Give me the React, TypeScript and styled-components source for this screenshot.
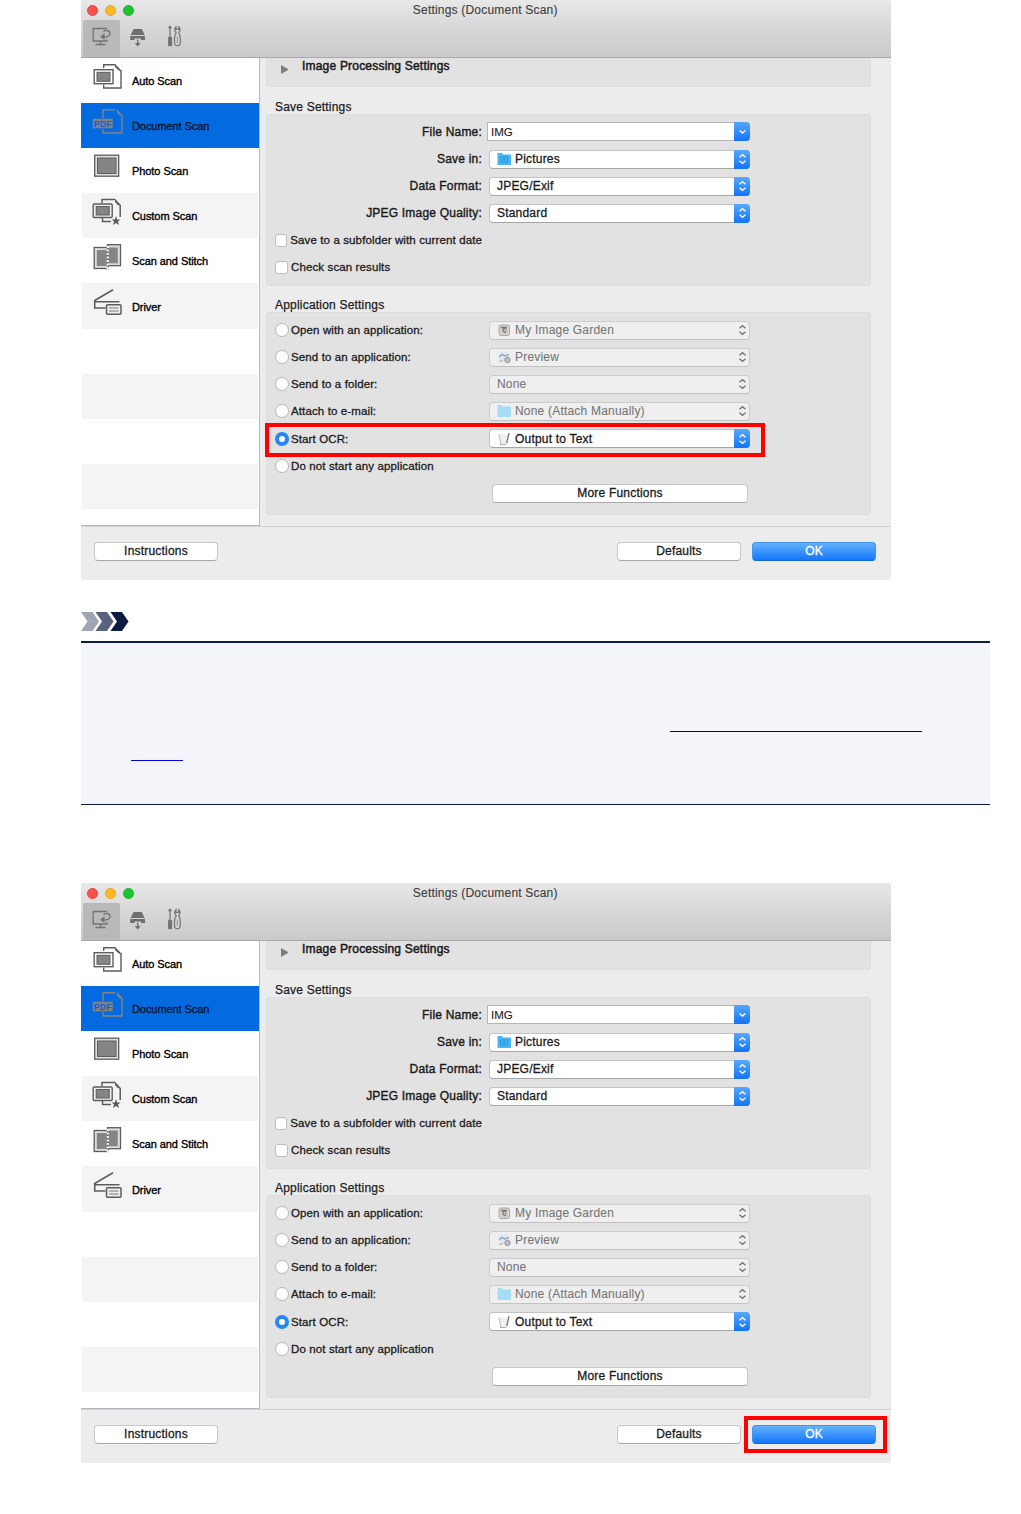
import React from "react";
import styled, { createGlobalStyle, css } from "styled-components";

const Global = createGlobalStyle`
  * { box-sizing: border-box; }
  body { margin: 0; background: #fff; font-family: "Liberation Sans", Arial, sans-serif; }
  svg { display: block; }
`;

const Page = styled.main`
  width: 1021px;
  height: 1514px;
  padding-left: 81px;
  overflow: hidden;
`;

const Win = styled.section`
  position: relative;
  display: flex;
  flex-direction: column;
  width: 809.5px;
  height: 579.5px;
  background: #ececec;
  border-radius: 3px;
  overflow: hidden;
  font-size: 12px;
  letter-spacing: 0.2px;
  line-height: 16px;
  color: #1c1c1c;
  white-space: nowrap;
`;

const Header = styled.header`
  display: flex;
  flex-direction: column;
  height: 58px;
  flex: none;
  background: linear-gradient(#e8e8e8, #d8d7d8 50%, #cacaca);
  border-bottom: 1px solid #a9a9a9;
`;

const TitleBar = styled.div`
  display: grid;
  grid-template-columns: 100px 1fr 100px;
  align-items: center;
  height: 20px;
  text-align: center;
  color: #424242;
  padding-right: 1px;
  -webkit-text-stroke: 0.15px #424242;
`;

const Lights = styled.div`
  display: flex;
  gap: 7px;
  padding-left: 6px;
`;

const Light = styled.i<{ $c: string; $b: string }>`
  width: 11px;
  height: 11px;
  border-radius: 50%;
  background: ${(p) => p.$c};
  border: 1px solid ${(p) => p.$b};
`;

const Toolbar = styled.nav`
  display: flex;
  flex: 1;
  padding-left: 2px;
`;

const Tool = styled.div<{ $on?: boolean }>`
  display: flex;
  justify-content: center;
  width: 36.5px;
  padding-top: 5px;
  border-radius: 2px 2px 0 0;
  background: ${(p) => (p.$on ? "#bab9ba" : "transparent")};
`;

const Body = styled.div`
  display: flex;
  height: 469px;
  flex: none;
  border-bottom: 1px solid #d3d3d3;
`;

const Sidebar = styled.aside`
  width: 179px;
  flex: none;
  background: #fff;
  border-right: 1px solid #b9bac2;
  border-bottom: 1px solid #b5b5ba;
  overflow: hidden;
`;

const Item = styled.div<{ $on?: boolean; $alt?: boolean }>`
  display: flex;
  align-items: center;
  height: 45.1px;
  padding: 1px 0 0 8px;
  gap: 6px;
  font-size: 11px;
  letter-spacing: -0.07px;
  color: #000;
  -webkit-text-stroke: 0.35px currentColor;
  background: ${(p) => (p.$alt ? "#f4f4f4" : "#fff")};
  margin: 0 1px;
  ${(p) =>
    p.$on &&
    css`
      margin: 0;
      padding-left: 9px;
      background: #036ae0;
      color: #06152f;
    `}
  svg {
    margin-top: -8px;
    -webkit-text-stroke: 0;
  }
`;

const Content = styled.div`
  display: flex;
  flex-direction: column;
  width: 611px;
  padding-left: 6px;
`;

const panel = css`
  background: #e2e2e2;
  border: 1px solid #dedede;
  border-radius: 3px;
`;

const Collapsed = styled.div`
  ${panel}
  display: flex;
  height: 29px;
  flex: none;
  border-top: 0;
  border-radius: 0 0 3px 3px;
  padding-left: 14px;
  gap: 14px;
  -webkit-text-stroke: 0.5px #1c1c1c;
`;

const Arrow = styled.i`
  margin-top: 7px;
  border: 4.5px solid transparent;
  border-left: 7px solid #7d7d7d;
  border-right: 0;
  height: 9px;
`;

const Heading = styled.h3<{ $top: number }>`
  margin: ${(p) => p.$top}px 0 0 9px;
  font: inherit;
  height: 14px;
  line-height: 14px;
  flex: none;
  -webkit-text-stroke: 0.25px #1c1c1c;
`;

const Panel = styled.div<{ $h: number; $pad: number }>`
  ${panel}
  height: ${(p) => p.$h}px;
  flex: none;
  padding-top: ${(p) => p.$pad}px;
`;

const Row = styled.div`
  display: grid;
  grid-template-columns: 215px 262px;
  column-gap: 6px;
  align-items: center;
  height: 27.1px;
`;

const Label = styled.span`
  text-align: right;
  -webkit-text-stroke: 0.4px #1c1c1c;
`;

const Choice = styled.label`
  display: flex;
  align-items: center;
  gap: 3px;
  padding-left: 8px;
  font-size: 11.5px;
  letter-spacing: 0.12px;
  -webkit-text-stroke: 0.3px #1c1c1c;
`;

const Check = styled.i`
  width: 12.5px;
  height: 12.5px;
  margin-right: 0.5px;
  background: #fff;
  border: 1px solid #bdbdbd;
  border-radius: 3px;
`;

const Radio = styled.i<{ $on?: boolean }>`
  width: 14px;
  height: 14px;
  margin-right: -1px;
  border-radius: 50%;
  border: ${(p) => (p.$on ? "4.5px solid #2388f5" : "1px solid #b7b7b7")};
  background: #fff;
`;

const Select = styled.div<{ $off?: boolean }>`
  display: flex;
  align-items: center;
  gap: 4px;
  width: 261px;
  height: 19px;
  margin-left: 1px;
  padding-left: 7px;
  border: 1px solid ${(p) => (p.$off ? "#cdcdcd" : "#c3c3c3")};
  border-bottom-color: ${(p) => (p.$off ? "#c2c2c2" : "#a6a6a6")};
  border-right-width: ${(p) => (p.$off ? 1 : 0)}px;
  border-radius: 4px;
  background: ${(p) => (p.$off ? "#efefef" : "#fff")};
  color: ${(p) => (p.$off ? "#777" : "#1c1c1c")};
  -webkit-text-stroke: ${(p) => (p.$off ? 0.1 : 0.3)}px;
`;

const Field = styled(Select)`
  width: 263px;
  margin-left: -1px;
  padding-left: 3px;
  border-radius: 0 4px 4px 0;
  border-color: #b5b5b5;
  font-size: 11.5px;
  letter-spacing: 0;
  -webkit-text-stroke: 0.1px;
`;

const Stepper = styled.span<{ $off?: boolean }>`
  display: flex;
  align-items: center;
  justify-content: center;
  width: 16px;
  height: 19px;
  margin: -1px ${(p) => (p.$off ? -1 : 0)}px -1px auto;
  flex: none;
  border-radius: 0 4px 4px 0;
  color: ${(p) => (p.$off ? "#777" : "#fff")};
  background: ${(p) => (p.$off ? "transparent" : "linear-gradient(#58a8f8, #1273fa)")};
`;

const Button = styled.button<{ $w: number; $primary?: boolean }>`
  width: ${(p) => p.$w}px;
  height: 19px;
  padding: 0;
  font: inherit;
  letter-spacing: inherit;
  line-height: 17px;
  color: ${(p) => (p.$primary ? "#fff" : "#1c1c1c")};
  -webkit-text-stroke: 0.3px;
  background: ${(p) => (p.$primary ? "linear-gradient(#64b1fb, #1476fb)" : "#fff")};
  border: 1px solid ${(p) => (p.$primary ? "#3f92ee" : "#c8c8c8")};
  border-bottom-color: ${(p) => (p.$primary ? "#1266dc" : "#a9a9a9")};
  border-radius: 4px;
`;

const More = styled.div`
  display: flex;
  align-items: center;
  height: 28px;
  padding-left: 225px;
`;

const Footer = styled.footer`
  display: flex;
  padding: 15px 14.5px 0 13px;
  gap: 11px;
`;

const Spacer = styled.span`
  flex: 1;
`;

/* Red callout drawn over the window contents. */
const Callout = styled.div<{ $x: number; $y: number; $w: number; $h: number }>`
  position: absolute;
  left: ${(p) => p.$x}px;
  top: ${(p) => p.$y}px;
  width: ${(p) => p.$w}px;
  height: ${(p) => p.$h}px;
  border: 4px solid #fe0000;
`;

const Chevrons = styled.div`
  height: 61.5px;
  padding-top: 32.5px;
`;

const Note = styled.section`
  display: flex;
  flex-direction: column;
  width: 909px;
  height: 164px;
  margin-bottom: 78px;
  padding: 88px 68px 0 50px;
  background: #f3f5fb;
  border-top: 2px solid #0b1c46;
  border-bottom: 1px solid #0b1c46;
`;

const LinkRule = styled.a<{ $w: number; $end?: boolean }>`
  width: ${(p) => p.$w}px;
  height: 1px;
  margin-bottom: 28px;
  background: ${(p) => (p.$end ? "#0000a8" : "#0000e0")};
  align-self: ${(p) => (p.$end ? "flex-end" : "flex-start")};
`;

const G = "#5c5c5c";

const icons: Record<string, React.ReactNode> = {
  auto: (
    <>
      <path d="M13.700 6V2.700H25.500M13.700 22.500V26H31V8" fill="none" stroke={G} strokeWidth="1.4" />
      <path d="M25 2L31.700 8.700H29L25 5Z" fill={G} />
      <rect x="4.200" y="7.700" width="18.800" height="14" fill="#fff" stroke={G} strokeWidth="1.4" />
      <rect x="7" y="10.300" width="13" height="9" fill="#858585" stroke={G} />
    </>
  ),
  pdf: (
    <>
      <path d="M13 11V2.700H25.500M13 22V26H32V8" fill="none" stroke="#86817f" strokeWidth="1.4" />
      <path d="M27 2L32.700 8.700H30L27 5.500Z" fill="#86817f" />
      <rect x="2.700" y="11.700" width="20" height="9.600" fill="#81807f" />
      <text x="3.800" y="19.500" fontSize="8.500" fontWeight="bold" letterSpacing="0.300" fill="#1264c8">PDF</text>
    </>
  ),
  photo: (
    <>
      <rect x="4.700" y="3.200" width="24" height="21" fill="#e0e0e0" stroke={G} strokeWidth="1.3" />
      <rect x="7.500" y="6" width="18.500" height="15.500" fill="#858585" stroke={G} />
    </>
  ),
  custom: (
    <>
      <path d="M12 6V2.500H25M12.500 21V24.500H21M30.200 8V20" fill="none" stroke={G} strokeWidth="1.5" />
      <path d="M25 1.800L31 8.200H28L25 5Z" fill={G} />
      <rect x="3.200" y="7" width="19" height="13.500" rx="1" fill="#eee" stroke={G} strokeWidth="1.4" />
      <rect x="6.200" y="9.500" width="13" height="8.500" fill="#858585" stroke={G} />
      <path d="M26 19L27.200 22.500H30.500L28 24.600L29 28L26 26L23 28L24 24.600L21.500 22.500H24.800Z" fill={G} />
    </>
  ),
  stitch: (
    <>
      <rect x="4.200" y="5.500" width="14" height="21" fill="#ddd" stroke={G} strokeWidth="1.3" />
      <rect x="6.800" y="8" width="10.500" height="16" fill="#858585" />
      <rect x="17.500" y="2.700" width="13" height="21" fill="#ddd" stroke={G} strokeWidth="1.3" />
      <rect x="18" y="5.500" width="9.800" height="15.800" fill="#858585" />
      <path d="M17.700 4V27" stroke="#fff" strokeWidth="2" strokeDasharray="2 1.500" />
    </>
  ),
  driver: (
    <>
      <path d="M23 1.700L4.700 12.500V20H15.500M4.700 13.700H29.500" fill="none" stroke={G} strokeWidth="1.6" />
      <rect x="16.500" y="16.700" width="14.500" height="9.500" rx="1" fill="#eee" stroke={G} strokeWidth="1.5" />
      <path d="M19 20H28.500M19 23H28.500" fill="none" stroke="#777" />
    </>
  ),
};

const SideIcon = ({ name }: { name: string }) => (
  <svg width="36" height="30" viewBox="0 0 36 30">{icons[name]}</svg>
);

const ScanTool = () => (
  <svg width="22" height="22" viewBox="0 0 22 22" fill="none" stroke="#737373" strokeWidth="1.300">
    <path d="M17 3.500H3.200V16H17V14.500M10.500 16V19M5.500 19.500H15.500" />
    <path d="M13.500 7C15 4.500 20 5 20 8.500C20 11.500 17 12 14 12" />
    <path d="M14.500 8.200L10 11.700L14.500 14.700Z" fill="#737373" stroke="none" />
  </svg>
);

const PanelTool = () => (
  <svg width="22" height="22" viewBox="0 0 22 22" fill="#6f6f6f">
    <path d="M6.700 4H14.700L17.700 10H3.500ZM3.200 11H18V15H14V13.500H7.500V15H3.200Z" />
    <path d="M10 14.500H11.400V18H13.700L10.700 21.500L7.700 18H10Z" />
  </svg>
);

const GearTool = () => (
  <svg width="22" height="22" viewBox="0 0 22 22" fill="none" stroke="#737373" strokeWidth="1.200">
    <path d="M7 2V12M5.500 3.200L7 1.200L8.500 3.200" />
    <rect x="5.700" y="12.500" width="2.800" height="8" fill="#737373" />
    <path d="M13 1.800C11.300 3.300 11.300 6 13 7.300V8.500C11.300 9.700 11.500 11.500 11.500 17.500C11.500 21.800 17.300 21.800 17.300 17.500C17.300 11.500 17.500 9.700 15.800 8.500V7.300C17.500 6 17.500 3.300 15.800 1.800V4.300H13Z" />
    <path d="M14.400 11.500V18" stroke="#a0a0a0" />
  </svg>
);

const UpDown = () => (
  <svg width="9" height="12" viewBox="0 0 9 12" fill="none" stroke="currentColor" strokeWidth="1.400">
    <path d="M1.500 4.300L4.500 1.700L7.500 4.300M1.500 7.700L4.500 10.300L7.500 7.700" />
  </svg>
);

const Down = () => (
  <svg width="9" height="6" viewBox="0 0 9 6" fill="none" stroke="currentColor" strokeWidth="1.500">
    <path d="M1.700 1.500L4.500 4L7.300 1.500" />
  </svg>
);

const small: Record<string, React.ReactNode> = {
  folder: (
    <>
      <path d="M0.500 1H5L6 2.500H14V13H0.500Z" fill="#49b5f3" />
      <rect x="3.500" y="5" width="7" height="5" fill="none" stroke="#2397dc" />
      <circle cx="7" cy="7.500" r="1.200" fill="#2397dc" />
    </>
  ),
  pale: <path d="M0.500 1H5L6 2.500H14V13H0.500Z" fill="#a6ddf5" />,
  garden: (
    <>
      <rect x="2" y="2" width="10.500" height="10.500" rx="2" fill="#d5d2ce" stroke="#aaa" />
      <path d="M4 4.500H10M10 5C5 4.500 4.500 9.500 9 9.500" fill="none" stroke="#7f7777" strokeWidth="1.300" />
      <circle cx="8.500" cy="7.500" r="1.500" fill="#b8a49a" />
    </>
  ),
  preview: (
    <>
      <path d="M1 2L11 1L12.500 10L2 11.500Z" fill="#e3e8ee" />
      <path d="M2 7L5 4.500L8 6L12 4.500" fill="none" stroke="#8faccb" strokeWidth="1.600" />
      <circle cx="10.500" cy="10" r="2.700" fill="#bdc2cb" stroke="#8c929b" />
      <path d="M2 11.500L6 10.500" stroke="#bea896" />
    </>
  ),
  text: (
    <>
      <path d="M1.500 2L3.500 12.500H10L12 3Z" fill="#f0f0f0" />
      <path d="M2 2.500L4 12.500H9.500" fill="none" stroke="#bbb" />
      <path d="M12 1L9.700 11" stroke="#777" strokeWidth="1.300" />
      <path d="M3 12.500H8" stroke="#c6a5a0" />
    </>
  ),
};

const Popup = ({ icon, text, off }: { icon?: string; text: string; off?: boolean }) => (
  <Select $off={off}>
    {icon && <svg width="14" height="14" viewBox="0 0 14 14">{small[icon]}</svg>}
    <span>{text}</span>
    <Stepper $off={off}><UpDown /></Stepper>
  </Select>
);

const side = [
  ["auto", "Auto Scan"],
  ["pdf", "Document Scan"],
  ["photo", "Photo Scan"],
  ["custom", "Custom Scan"],
  ["stitch", "Scan and Stitch"],
  ["driver", "Driver"],
  ["", ""],
  ["", ""],
  ["", ""],
  ["", ""],
  ["", ""],
];

const apps = [
  { label: "Open with an application:", icon: "garden", text: "My Image Garden", off: true },
  { label: "Send to an application:", icon: "preview", text: "Preview", off: true },
  { label: "Send to a folder:", text: "None", off: true },
  { label: "Attach to e-mail:", icon: "pale", text: "None (Attach Manually)", off: true },
  { label: "Start OCR:", icon: "text", text: "Output to Text", off: false },
];

const SettingsWindow = ({ children }: { children: React.ReactNode }) => (
  <Win>
    <Header>
      <TitleBar>
        <Lights>
          <Light $c="#fc504b" $b="#e8443f" />
          <Light $c="#fdb924" $b="#e9a51d" />
          <Light $c="#1fc431" $b="#19b52a" />
        </Lights>
        <span>Settings (Document Scan)</span>
      </TitleBar>
      <Toolbar>
        <Tool $on><ScanTool /></Tool>
        <Tool><PanelTool /></Tool>
        <Tool><GearTool /></Tool>
      </Toolbar>
    </Header>
    <Body>
      <Sidebar>
        {side.map(([icon, label], i) => (
          <Item key={i} $on={i === 1} $alt={i % 2 === 1}>
            {icon && <SideIcon name={icon} />}
            {label}
          </Item>
        ))}
      </Sidebar>
      <Content>
        <Collapsed><Arrow />Image Processing Settings</Collapsed>
        <Heading $top={13}>Save Settings</Heading>
        <Panel $h={172} $pad={3.4}>
          <Row>
            <Label>File Name:</Label>
            <Field><span>IMG</span><Stepper><Down /></Stepper></Field>
          </Row>
          <Row><Label>Save in:</Label><Popup icon="folder" text="Pictures" /></Row>
          <Row><Label>Data Format:</Label><Popup text="JPEG/Exif" /></Row>
          <Row><Label>JPEG Image Quality:</Label><Popup text="Standard" /></Row>
          <Row><Choice><Check />Save to a subfolder with current date</Choice></Row>
          <Row><Choice><Check />Check scan results</Choice></Row>
        </Panel>
        <Heading $top={12}>Application Settings</Heading>
        <Panel $h={203} $pad={3.6}>
          {apps.map((a) => (
            <Row key={a.label}>
              <Choice><Radio $on={!a.off} />{a.label}</Choice>
              <Popup icon={a.icon} text={a.text} off={a.off} />
            </Row>
          ))}
          <Row><Choice><Radio />Do not start any application</Choice></Row>
          <More><Button $w={256}>More Functions</Button></More>
        </Panel>
      </Content>
    </Body>
    <Footer>
      <Button $w={124}>Instructions</Button>
      <Spacer />
      <Button $w={124}>Defaults</Button>
      <Button $w={124} $primary>OK</Button>
    </Footer>
    {children}
  </Win>
);

export default function App() {
  return (
    <Page>
      <Global />
      <SettingsWindow>
        <Callout $x={183.5} $y={423} $w={500} $h={33.5} />
      </SettingsWindow>
      <Chevrons>
        <svg width="48" height="19" viewBox="0 0 48 19">
          <path d="M0 0H11.500L18 9.500L11.500 19H0L6.500 9.500Z" fill="#a0a5b4" />
          <path d="M14.500 0H26L32.500 9.500L26 19H14.500L21 9.500Z" fill="#5a637c" />
          <path d="M29.500 0H41L47.500 9.500L41 19H29.500L36 9.500Z" fill="#0d1b40" />
        </svg>
      </Chevrons>
      <Note>
        <LinkRule $w={252} $end />
        <LinkRule $w={52} />
      </Note>
      <SettingsWindow>
        <Callout $x={662.6} $y={533} $w={143} $h={36.5} />
      </SettingsWindow>
    </Page>
  );
}
